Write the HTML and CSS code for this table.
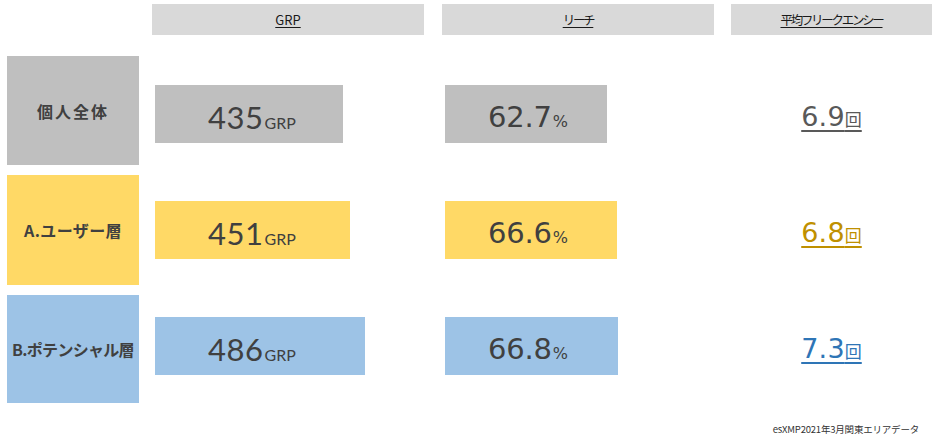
FILE: index.html
```html
<!DOCTYPE html>
<html lang="ja">
<head>
<meta charset="utf-8">
<title>GRP / リーチ / 平均フリークエンシー</title>
<link rel="stylesheet" href="styles.css">
</head>
<body>
<div class="board">
  <div class="grid">
    <div class="corner"></div>
    <div class="head head-wide"><span class="head-text latin">GRP</span></div>
    <div class="head head-wide"><span class="head-text kana">リーチ</span></div>
    <div class="head head-narrow"><span class="head-text kana">平均フリークエンシー</span></div>

    <div class="label gray row1 lbl-a">個人全体</div>
    <div class="cell r1"><div class="bar gray grp-bar" style="width:188px"><span class="num lato">435</span><span class="unit lato">GRP</span></div></div>
    <div class="cell r1"><div class="bar gray reach-bar" style="width:162px"><span class="num dv">62.7</span><span class="unit dv pct">%</span></div></div>
    <div class="cell r1 freq-cell"><span class="freq c-gray"><span class="fnum">6.9</span><span class="funit">回</span></span></div>

    <div class="label yellow row2 lbl-b">A.ユーザー層</div>
    <div class="cell r2"><div class="bar yellow grp-bar" style="width:195px"><span class="num lato">451</span><span class="unit lato">GRP</span></div></div>
    <div class="cell r2"><div class="bar yellow reach-bar" style="width:172px"><span class="num dv">66.6</span><span class="unit dv pct">%</span></div></div>
    <div class="cell r2 freq-cell"><span class="freq c-gold"><span class="fnum">6.8</span><span class="funit">回</span></span></div>

    <div class="label blue row3 lbl-c">B.ポテンシャル層</div>
    <div class="cell r3"><div class="bar blue grp-bar" style="width:210px"><span class="num lato">486</span><span class="unit lato">GRP</span></div></div>
    <div class="cell r3"><div class="bar blue reach-bar" style="width:173px"><span class="num dv">66.8</span><span class="unit dv pct">%</span></div></div>
    <div class="cell r3 freq-cell"><span class="freq c-blue"><span class="fnum">7.3</span><span class="funit">回</span></span></div>
  </div>
  <div class="source">esXMP2021年3月関東エリアデータ</div>
</div>
</body>
</html>
```
FILE: styles.css
```css
html, body {
  margin: 0;
  padding: 0;
  background: #ffffff;
}
body {
  font-family: "Noto Sans CJK JP", "Noto Sans", sans-serif;
  color: #404040;
  width: 942px;
  height: 439px;
  overflow: hidden;
}
.board {
  padding: 4px 10px 0 7px;
}
.grid {
  display: grid;
  grid-template-columns: 145px 290px 289px 201px;
  grid-template-rows: 31px 130px 120px 118px;
}
.head {
  background: #d9d9d9;
  display: flex;
  align-items: center;
  justify-content: center;
}
.head-wide { width: 272px; }
.head-narrow { width: 201px; }
.head-text {
  color: #1a1a1a;
  text-decoration: underline;
  text-decoration-thickness: 1px;
  text-underline-offset: 2px;
}
.head-text.latin { font-size: 13px; }
.head-text.kana { font-size: 12.5px; letter-spacing: -2.3px; }

.label {
  width: 132px;
  display: flex;
  align-items: center;
  justify-content: center;
  font-weight: 700;
  font-size: 16px;
  color: #404040;
}
.row1 { margin-top: 21px; }
.row2 { margin-top: 10px; }
.row3 { margin-top: 10px; height: 108px; }
.lbl-a { letter-spacing: 2px; }
.lbl-b { letter-spacing: 0.4px; }
.lbl-c { letter-spacing: -0.7px; }

.gray { background: #bfbfbf; }
.yellow { background: #ffd966; }
.blue { background: #9dc3e6; }

.cell {
  display: flex;
  align-items: flex-start;
}
.r1 { padding-top: 50px; }
.r2 { padding-top: 36px; }
.r3 { padding-top: 32px; }

.bar {
  margin-left: 3px;
  height: 58px;
  display: flex;
  align-items: baseline;
  box-sizing: border-box;
  padding-top: 12px;
}
.grp-bar { padding-left: 53px; }
.reach-bar { padding-left: 43px; }
.num {
  color: #404040;
  line-height: 40px;
}
.lato { font-family: Lato, "Noto Sans", sans-serif; }
.dv { font-family: "DejaVu Sans", Verdana, sans-serif; }
.num.lato { font-size: 31px; letter-spacing: 0.5px; }
.unit.lato { font-size: 16px; margin-left: 1px; }
.num.dv { font-size: 29px; letter-spacing: -0.2px; }
.unit.pct { font-size: 16px; margin-left: 1px; }

.freq-cell {
  width: 201px;
  justify-content: center;
}
.freq {
  height: 58px;
  box-sizing: border-box;
  padding-top: 12px;
  display: flex;
  align-items: baseline;
  line-height: 40px;
}
.fnum {
  font-family: "DejaVu Sans", Verdana, sans-serif;
  font-size: 27px;
  letter-spacing: 0.2px;
  text-decoration: underline;
  text-decoration-thickness: 2px;
  text-underline-offset: 4px;
}
.funit {
  font-family: "Noto Sans CJK JP", sans-serif;
  font-size: 17px;
  text-decoration: underline;
  text-decoration-thickness: 2px;
  text-underline-offset: 4px;
}
.c-gray { color: #595959; }
.c-gold { color: #bf9000; }
.c-blue { color: #2e75b6; }

.source {
  font-family: "Noto Sans CJK JP", sans-serif;
  font-size: 9.5px;
  color: #333333;
  text-align: right;
  padding-right: 13px;
  margin-top: 19px;
  letter-spacing: -0.2px;
}
```
